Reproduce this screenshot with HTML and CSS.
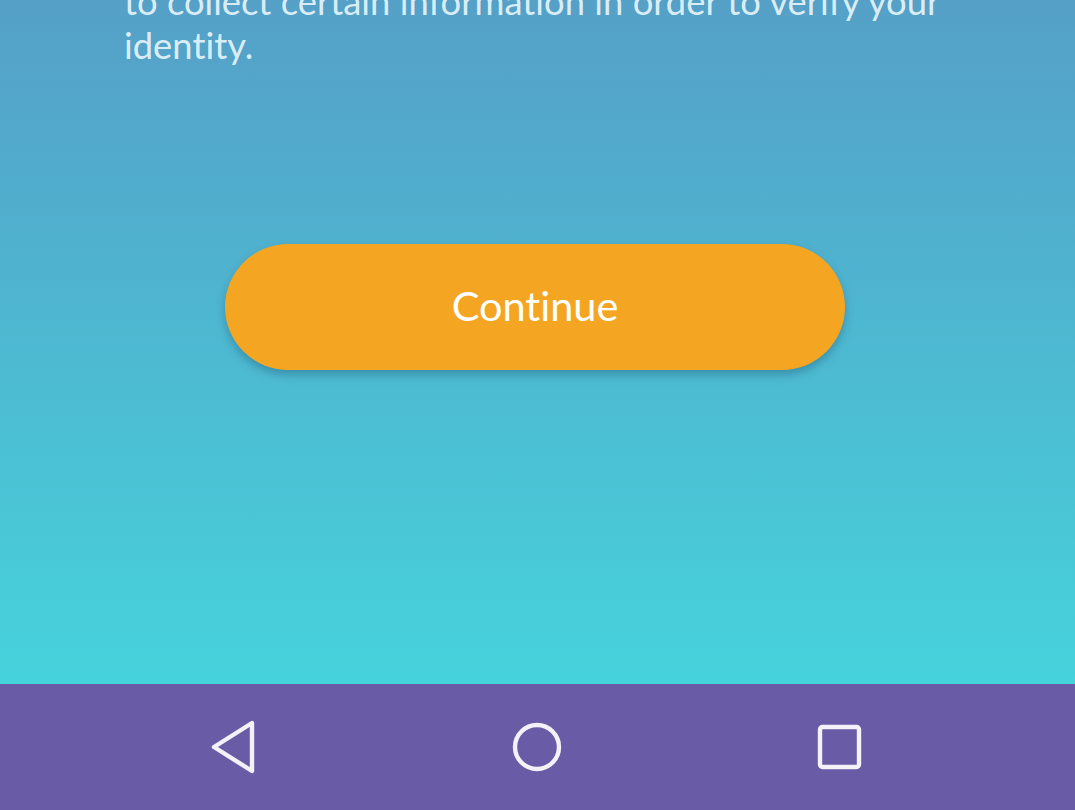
FILE: index.html
```html
<!DOCTYPE html>
<html lang="en">
<head>
<meta charset="utf-8">
<title>Verify identity</title>
<link rel="stylesheet" href="styles.css">
</head>
<body>
<div class="screen">
  <main class="content">
    <p class="intro">to collect certain information in order to verify your identity.</p>
    <button class="continue" type="button">Continue</button>
  </main>
  <nav class="navbar">
    <button class="nav-btn" aria-label="Back">
      <svg width="48" height="56" viewBox="0 0 48 56"><path d="M42 4 L4 28 L42 52 Z" fill="none" stroke="#f4f1f8" stroke-width="4.4" stroke-linejoin="round"/></svg>
    </button>
    <button class="nav-btn" aria-label="Home">
      <svg width="52" height="52" viewBox="0 0 52 52"><circle cx="26" cy="26" r="22" fill="none" stroke="#f4f1f8" stroke-width="4.4"/></svg>
    </button>
    <button class="nav-btn" aria-label="Recent apps">
      <svg width="48" height="48" viewBox="0 0 48 48"><rect x="4" y="4" width="39" height="40" rx="2.5" fill="none" stroke="#f4f1f8" stroke-width="4.4"/></svg>
    </button>
  </nav>
</div>
</body>
</html>
```
FILE: styles.css
```css
html, body {
  margin: 0;
  padding: 0;
  height: 100%;
  overflow: hidden;
}
body {
  font-family: Lato, "Open Sans", sans-serif;
  font-variant-ligatures: none;
}
.screen {
  width: 1075px;
  height: 810px;
  display: flex;
  flex-direction: column;
}
.content {
  height: 684px;
  background: linear-gradient(to bottom, #55a0c7 0%, #4fb3cf 40%, #46d3dc 100%);
  display: flex;
  flex-direction: column;
  align-items: center;
  overflow: hidden;
}
.intro {
  box-sizing: border-box;
  align-self: stretch;
  margin: -21px 0 0 0;
  padding: 0 110px 0 124px;
  font-size: 36.4px;
  line-height: 44px;
  color: rgba(236, 248, 253, 0.9);
}
.continue {
  margin: 177px 5px 0 0;
  width: 620px;
  height: 126px;
  border: none;
  border-radius: 63px;
  background: #f4a623;
  color: #ffffff;
  font-family: Lato, "Open Sans", sans-serif;
  font-variant-ligatures: none;
  font-size: 41.5px;
  box-shadow: 0 5px 8px rgba(30, 70, 100, 0.35);
  padding: 0 0 4px 0;
}
.navbar {
  height: 126px;
  background: #6a5ba6;
  display: flex;
  align-items: center;
  justify-content: center;
  padding-left: 1px;
  padding-right: 3px;
}
.nav-btn {
  border: none;
  background: none;
  padding: 0;
  display: flex;
  align-items: center;
  justify-content: center;
  width: 303px;
  height: 126px;
}
```
